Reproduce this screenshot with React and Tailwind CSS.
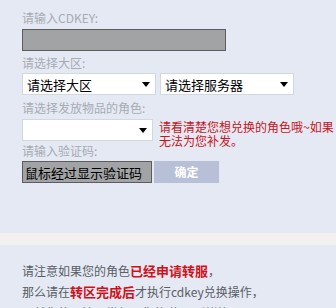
import React from "react";

const font = { fontFamily: '"Noto Sans CJK SC", "Noto Sans", sans-serif' };

function Arrow() {
  return (
    <svg width="8" height="5" viewBox="0 0 8 5" className="shrink-0">
      <path d="M0 0 L8 0 L4 5 Z" fill="#000" />
    </svg>
  );
}

function Select({ text, width }) {
  return (
    <div
      className={`flex h-[22px] shrink-0 items-center justify-between border border-[#d3d7de] bg-white pl-[4px] pr-[5px] text-[13px] leading-none text-black ${width}`}
    >
      <span>{text}</span>
      <Arrow />
    </div>
  );
}

export default function App() {
  return (
    <div className="h-[308px] w-[336px] overflow-hidden bg-[#e4e9f3]" style={font}>
      <div className="flex flex-col items-start pl-[22px] pt-[10px]">
        <div className="h-[15px] text-[12px] leading-[15px] text-[#a7abb4]">请输入CDKEY:</div>
        <div className="mt-[4px] h-[22px] w-[204px] border border-[#5b5c5e] bg-[#a2a3a5]" />
        <div className="mt-[4px] h-[15px] text-[12px] leading-[15px] text-[#a7abb4]">请选择大区:</div>
        <div className="mt-[3px] flex gap-[4px]">
          <Select text="请选择大区" width="w-[134px]" />
          <Select text="请选择服务器" width="w-[134px]" />
        </div>
        <div className="mt-[5px] h-[15px] text-[12px] leading-[15px] text-[#a7abb4]">请选择发放物品的角色:</div>
        <div className="mt-[4px] flex h-[22px] items-start gap-[6px]">
          <Select text="" width="w-[131px]" />
          <div className="pt-[1px] text-[12px] leading-[14px] whitespace-nowrap text-[#c8141c]">
            请看清楚您想兑换的角色哦~如果
            <br />
            无法为您补发。
          </div>
        </div>
        <div className="mt-[2px] h-[15px] text-[12px] leading-[15px] text-[#a7abb4]">请输入验证码:</div>
        <div className="mt-[3px] flex gap-[2px]">
          <div className="flex h-[22px] w-[130px] items-center border border-[#5b5c5e] bg-[#a2a3a5] pl-[2px] text-[13px] leading-none text-black">
            鼠标经过显示验证码
          </div>
          <div className="flex h-[22px] w-[65px] items-center justify-center bg-[#b7c0d6] text-[12px] font-bold leading-none text-white">
            确定
          </div>
        </div>
      </div>
      <div className="mt-[50px] h-[12px] bg-[#f3f1ef]" />
      <div className="flex flex-col pl-[22px] pt-[15px] text-[12px] leading-[21px] text-[#5a5d66]">
        <div>
          请注意如果您的角色<span className="text-[13px] font-bold text-[#d0101a]">已经申请转服</span>，
        </div>
        <div>
          那么请在<span className="text-[13px] font-bold text-[#d0101a]">转区完成后</span>才执行cdkey兑换操作，
        </div>
        <div>不然你将无法正常领取你的道具，谢谢</div>
      </div>
    </div>
  );
}
